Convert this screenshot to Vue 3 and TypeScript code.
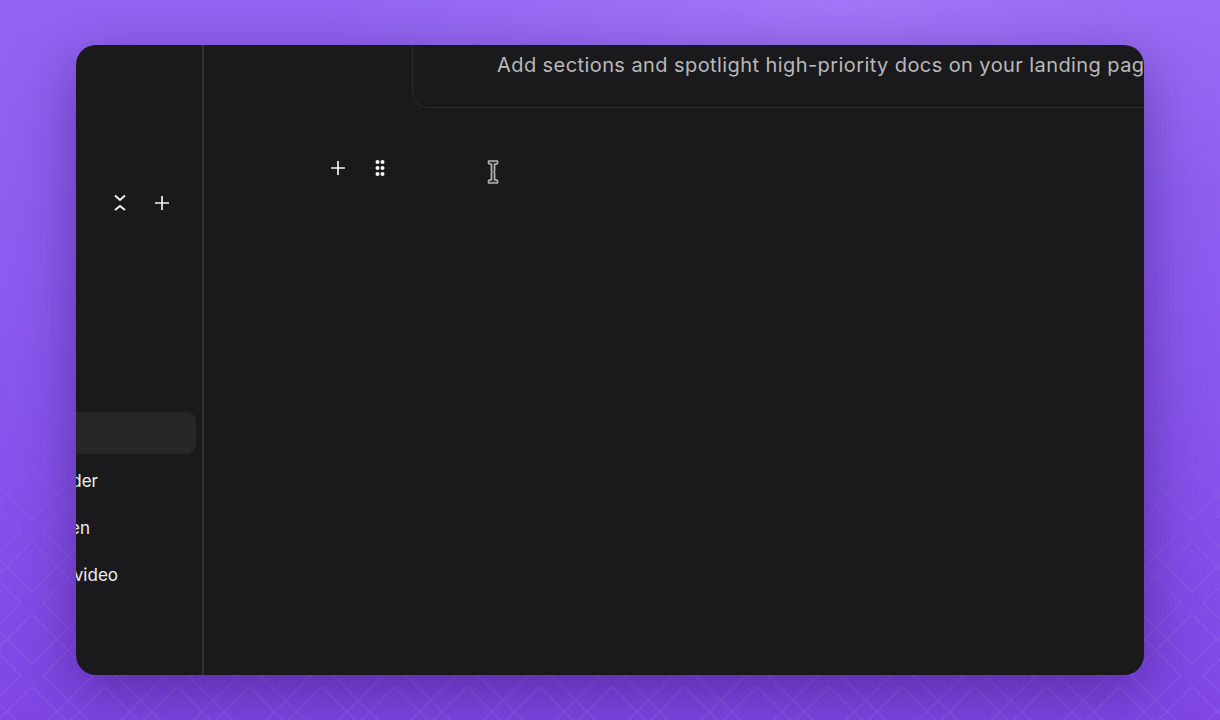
<script setup lang="ts">
const rows: { label: string; cls: string; active?: boolean }[] = [
  { label: '', cls: 'active', active: true },
  { label: 'Add folder', cls: 'r1' },
  { label: 'Fullscreen', cls: 'r2' },
  { label: 'Add a video', cls: 'r3' },
]
</script>

<template>
  <div class="stage">
    <svg class="lattice" width="1220" height="720" aria-hidden="true">
      <defs>
        <pattern id="diamonds" patternUnits="userSpaceOnUse" x="32" y="-13.3" width="72.5" height="72.5">
          <g fill="none" stroke="#fff" stroke-width="1.5">
            <path d="M36.25 11.25 L61.25 36.25 L36.25 61.25 L11.25 36.25 Z" />
            <path d="M25 0 L0 25 M25 0 L0 -25 M25 0 L36.25 11.25 M25 0 L36.25 -11.25" />
            <path d="M47.5 0 L72.5 25 M47.5 0 L72.5 -25 M47.5 0 L36.25 11.25 M47.5 0 L36.25 -11.25" />
            <path d="M25 72.5 L0 47.5 M25 72.5 L36.25 61.25" />
            <path d="M47.5 72.5 L72.5 47.5 M47.5 72.5 L36.25 61.25" />
          </g>
        </pattern>
      </defs>
      <rect width="1220" height="720" fill="url(#diamonds)" />
    </svg>

    <div class="window">
      <aside class="sidebar">
        <div class="tools">
          <button class="icon" type="button" aria-label="Collapse all">
            <svg width="14" height="18" viewBox="0 0 14 18" fill="none" stroke="currentColor" stroke-width="1.8">
              <path d="M2 1.5 L7 6 L12 1.5" />
              <path d="M2 16 L7 12 L12 16" />
            </svg>
          </button>
          <button class="icon" type="button" aria-label="Add">
            <svg width="14" height="14" viewBox="0 0 14 14" fill="none" stroke="currentColor" stroke-width="1.7">
              <path d="M7 0 V14 M0 7 H14" />
            </svg>
          </button>
        </div>
        <ul class="list">
          <li v-for="row in rows" :key="row.cls" class="row" :class="row.cls">
            <span>{{ row.label }}</span>
          </li>
        </ul>
      </aside>

      <main class="main">
        <div class="card">
          <p>Add sections and spotlight high-priority docs on your landing page to guide readers</p>
        </div>
        <div class="block">
          <button class="icon" type="button" aria-label="Add block">
            <svg width="14" height="14" viewBox="0 0 14 14" fill="none" stroke="currentColor" stroke-width="1.7">
              <path d="M7 0 V14 M0 7 H14" />
            </svg>
          </button>
          <button class="icon grip" type="button" aria-label="Move block">
            <svg width="10" height="16" viewBox="0 0 10 16" fill="currentColor">
              <circle cx="2.5" cy="2" r="2" />
              <circle cx="7.5" cy="2" r="2" />
              <circle cx="2.5" cy="8" r="2" />
              <circle cx="7.5" cy="8" r="2" />
              <circle cx="2.5" cy="14" r="2" />
              <circle cx="7.5" cy="14" r="2" />
            </svg>
          </button>
          <svg class="caret" width="12" height="24" viewBox="0 0 12 24" fill="#333" stroke="#b4b4b4" stroke-width="1.6" stroke-linejoin="round">
            <path d="M1.5 1 H10.5 V3.6 L7.6 4.6 V11 L7.2 12 L7.6 13 V19.4 L10.5 20.4 V23 H1.5 V20.4 L4.4 19.4 V13 L4.8 12 L4.4 11 V4.6 L1.5 3.6 Z" />
          </svg>
        </div>
      </main>
    </div>
  </div>
</template>

<style scoped>
.stage {
  position: relative;
  width: 1220px;
  height: 720px;
  padding: 45px 76px;
  box-sizing: border-box;
  overflow: hidden;
  background:
    radial-gradient(ellipse 520px 260px at 840px 0, rgba(176, 138, 255, 0.5), rgba(176, 138, 255, 0) 100%),
    linear-gradient(180deg, #9465f3 0%, #8c5bf0 40%, #7f46e4 100%);
  font-family: Inter, "Noto Sans", sans-serif;
}
.lattice {
  position: absolute;
  inset: 0;
  opacity: 0.085;
  -webkit-mask-image: linear-gradient(180deg, transparent 350px, #000 680px);
  mask-image: linear-gradient(180deg, transparent 350px, #000 680px);
}
.window {
  position: relative;
  display: flex;
  width: 1068px;
  height: 630px;
  border-radius: 20px;
  overflow: hidden;
  background: #1a1a1c;
  box-shadow: 0 16px 60px rgba(45, 15, 100, 0.5);
}
.sidebar {
  width: 126px;
  flex: none;
  border-right: 2px solid #303032;
  overflow: hidden;
  padding-top: 143px;
}
.tools {
  display: flex;
  justify-content: flex-end;
  gap: 12px;
  height: 30px;
  padding-right: 25px;
}
.icon {
  display: flex;
  align-items: center;
  justify-content: center;
  width: 30px;
  height: 30px;
  padding: 0;
  border: 0;
  background: none;
  color: #f4f4f4;
}
.list {
  list-style: none;
  margin: 194px 0 0;
  padding: 0 6px 0 0;
  display: flex;
  flex-direction: column;
  gap: 5px;
}
.row {
  display: flex;
  justify-content: flex-end;
  align-items: center;
  box-sizing: border-box;
  height: 42px;
  padding-top: 1px;
  white-space: nowrap;
  font-size: 17px;
  color: #f0f0f0;
}
.row.active {
  background: #272729;
  border-radius: 0 9px 9px 0;
}
.r1 {
  padding-right: 98px;
}
.r2 {
  padding-right: 106px;
}
.r3 {
  padding-right: 78px;
}
.main {
  flex: 1;
  min-width: 0;
  overflow: hidden;
}
.card {
  box-sizing: border-box;
  width: 1000px;
  height: 93px;
  margin: -30px 0 0 208px;
  padding: 33px 0 0 84px;
  border: 1px solid #2c2c2e;
  border-radius: 16px;
}
.card p {
  margin: 0;
  white-space: nowrap;
  font-size: 20px;
  letter-spacing: 0.42px;
  line-height: 32px;
  color: #b9b9b9;
}
.block {
  display: flex;
  align-items: center;
  height: 30px;
  margin: 45px 0 0 119px;
}
.grip {
  margin-left: 12px;
}
.caret {
  margin: 8px 0 0 92px;
}
</style>

<style>
html,
body {
  margin: 0;
  background: #7f46e4;
}
</style>
